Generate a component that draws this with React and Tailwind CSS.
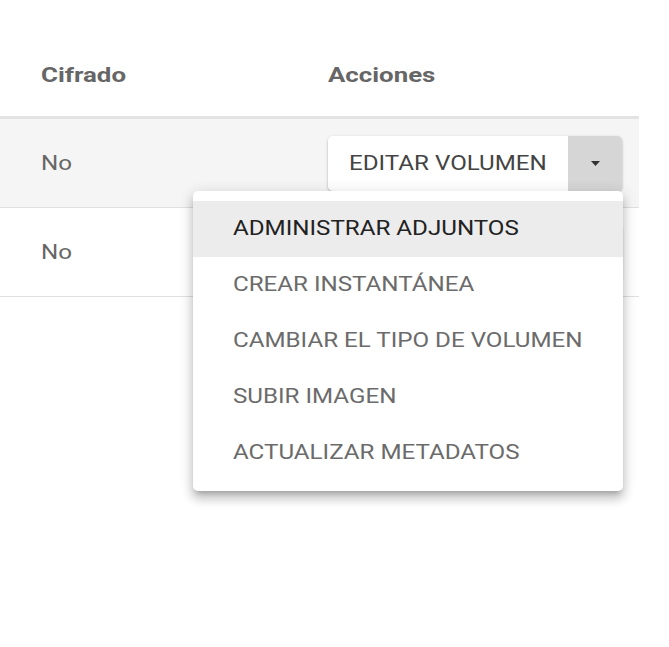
import React from "react";

function R({ children }) {
  return <span className="inline-block origin-left scale-x-[1.15] whitespace-nowrap">{children}</span>;
}
function B({ children }) {
  return <span className="inline-block origin-left scale-x-[1.23] whitespace-nowrap">{children}</span>;
}

function SplitButton() {
  return (
    <div className="flex h-[55px] w-[294px] rounded-[5px] shadow-[0_1px_3px_rgba(0,0,0,0.22),0_1px_2px_rgba(0,0,0,0.12)]">
      <div className="flex w-[240px] items-center rounded-l-[5px] bg-white pl-[21px] text-[21px] leading-[24px] text-[#444]">
        <R>EDITAR VOLUMEN</R>
      </div>
      <div className="flex flex-1 items-center justify-center rounded-r-[5px] bg-[#d6d6d6]">
        <svg width="9" height="5" viewBox="0 0 9 5">
          <path d="M0 0 L9 0 L4.5 5 Z" fill="#333" />
        </svg>
      </div>
    </div>
  );
}

const items = [
  "ADMINISTRAR ADJUNTOS",
  "CREAR INSTANTÁNEA",
  "CAMBIAR EL TIPO DE VOLUMEN",
  "SUBIR IMAGEN",
  "ACTUALIZAR METADATOS",
];

export default function App() {
  return (
    <div
      className="relative h-[647px] w-[669px] overflow-hidden bg-white"
      style={{ fontFamily: "Roboto, 'Liberation Sans', sans-serif" }}
    >
      <div className="w-[639px]">
        <div className="grid h-[119px] grid-cols-[328px_1fr] border-b-[3px] border-[#e3e3e3] pt-[63px] text-[21px] font-bold leading-[24px] text-[#666]">
          <div className="pl-[41px]"><B>Cifrado</B></div>
          <div><B>Acciones</B></div>
        </div>
        <div className="grid h-[89px] grid-cols-[328px_1fr] items-center border-b border-[#e0e0e0] bg-[#f5f5f5] text-[21px] leading-[24px] text-[#666]">
          <div className="pl-[41px]"><R>No</R></div>
          <SplitButton />
        </div>
        <div className="grid h-[89px] grid-cols-[328px_1fr] items-center border-b border-[#e0e0e0] bg-white text-[21px] leading-[24px] text-[#666]">
          <div className="pl-[41px]"><R>No</R></div>
          <SplitButton />
        </div>
      </div>

      <div className="absolute left-[193px] top-[191px] w-[430px] rounded-[5px] bg-white py-[10px] shadow-[0_5px_5px_-3px_rgba(0,0,0,0.2),0_8px_10px_1px_rgba(0,0,0,0.14),0_3px_14px_2px_rgba(0,0,0,0.12)]">
        {items.map((t, i) => (
          <div
            key={t}
            className={
              i === 0
                ? "flex h-[56px] items-center bg-[#ececec] pl-[40px] text-[21px] text-[#222]"
                : "flex h-[56px] items-center pl-[40px] text-[21px] text-[#6b6b6b]"
            }
          >
            <R>{t}</R>
          </div>
        ))}
      </div>
    </div>
  );
}
